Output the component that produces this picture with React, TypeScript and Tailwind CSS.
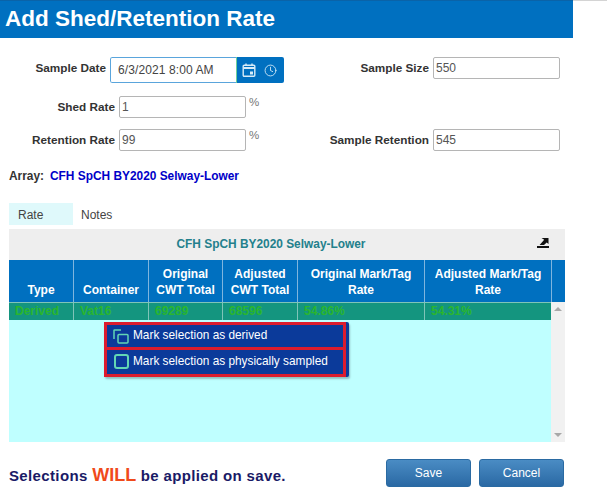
import { Clock } from "lucide-react";

function Field({ label, value, labelW, pct }: { label: string; value: string; labelW: string; pct?: boolean }) {
  return (
    <div className="flex items-start">
      <span className={`${labelW} text-right text-[11.75px] font-bold text-[#333] pt-[2px] pr-[4px] whitespace-nowrap`}>{label}</span>
      <div className="w-[127px] h-[22px] border border-[#b5b5b5] rounded-[2px] bg-white text-[12px] text-[#555] pl-[2px] leading-[20px]">{value}</div>
      {pct && <span className="ml-[3px] text-[11.5px] text-[#777] leading-[13px]">%</span>}
    </div>
  );
}

function HeadCell({ w, children }: { w: string; children: React.ReactNode }) {
  return (
    <div className={`${w} border-r border-[#7fb5de] flex items-end justify-center text-center pb-[4px] leading-[15.5px]`}>
      <span>{children}</span>
    </div>
  );
}

function RowCell({ w, children, last }: { w: string; children: React.ReactNode; last?: boolean }) {
  return (
    <div className={`${w} ${last ? "" : "border-r border-[#7fc4b8]"} pl-[6px] leading-[17px]`}>{children}</div>
  );
}

function DerivedIcon() {
  return (
    <svg width="16" height="15" viewBox="0 0 16 15" fill="none" stroke="#62d6b4" strokeWidth="1.5">
      <path d="M1 10V1.5a.5.5 0 0 1 .5-.5H8" />
      <rect x="5" y="5.5" width="10" height="8.5" rx="1" />
    </svg>
  );
}

function CalendarIcon() {
  return (
    <svg width="14" height="14" viewBox="0 0 14 14" fill="none" stroke="#d8ecf8" strokeWidth="1.4">
      <rect x="1.2" y="2.2" width="11.6" height="11" rx="1" />
      <path d="M1.2 5h11.6" strokeWidth="1.8" />
      <path d="M4 0.5v2.5M10 0.5v2.5" />
      <rect x="8" y="8.5" width="3" height="3" fill="#d8ecf8" stroke="none" />
    </svg>
  );
}

function ExportIcon() {
  return (
    <svg width="12" height="10" viewBox="0 0 12 10" fill="#111111">
      <rect x="0" y="8" width="12" height="2" />
      <path d="M4.5 0H11.5V6L9.7 4.4 7 7H2.6L7.2 1.8z" />
    </svg>
  );
}

export default function App() {
  return (
    <div className="w-[607px] h-[496px] bg-white overflow-hidden font-['Liberation_Sans',Arial,sans-serif] relative">
      <div className="flex h-[38px]">
        <div className="w-[573px] h-[38px] bg-[#0070c0] text-white text-[22.5px] font-bold pl-[5px] leading-[35px] border-t border-[#0a63a8]">
          Add Shed/Retention Rate
        </div>
        <div className="flex-1 h-px bg-[#d4d4d4]" />
      </div>

      <div className="mt-[19px] grid grid-cols-[320px_1fr]">
        <div className="flex items-start">
          <span className="w-[110px] text-right pr-[4px] pt-[2px] text-[11.75px] font-bold text-[#333] whitespace-nowrap">Sample Date</span>
          <div className="flex h-[26px] w-[174px] rounded-[2px] overflow-hidden">
            <div className="w-[126px] border border-[#5aa5dc] border-r-0 rounded-l-[2px] text-[12px] text-[#444] font-medium pl-[7px] leading-[25px] tracking-[0.1px]">6/3/2021 8:00 AM</div>
            <div className="w-px bg-[#6fd09a]" />
            <div className="flex-1 bg-[#0070c0] flex items-center gap-[8px] pl-[5px] text-[#d8ecf8]">
              <CalendarIcon />
              <Clock size={13} strokeWidth={1.6} />
            </div>
          </div>
        </div>
        <div className="flex justify-end pr-[47px]">
          <Field label="Sample Size" value="550" labelW="w-[100px]" />
        </div>
      </div>

      <div className="mt-[13px]">
        <Field label="Shed Rate" value="1" labelW="w-[119px]" pct />
      </div>

      <div className="mt-[11px] grid grid-cols-[320px_1fr]">
        <Field label="Retention Rate" value="99" labelW="w-[119px]" pct />
        <div className="flex justify-end pr-[47px]">
          <Field label="Sample Retention" value="545" labelW="w-[112px]" />
        </div>
      </div>

      <div className="mt-[18px] pl-[9px] flex text-[11.9px] font-bold leading-[14px]">
        <span className="text-[#333] w-[41px]">Array:</span>
        <span className="text-[#0000c8]">CFH SpCH BY2020 Selway-Lower</span>
      </div>

      <div className="mt-[20px] ml-[9px] flex text-[12px] text-[#444] h-[22px] leading-[24px]">
        <span className="w-[64px] bg-[#dff9fb] pl-[9px]">Rate</span>
        <span className="pl-[8px]">Notes</span>
      </div>

      <div className="mt-[4px] ml-[9px] w-[556px] h-[213px] flex flex-col bg-[#eeeeee]">
        <div className="h-[31px] flex items-center relative text-[11.9px] font-bold text-[#23808c] justify-center pr-[32px] shrink-0">
          CFH SpCH BY2020 Selway-Lower
          <span className="absolute left-[528px] top-[9px]"><ExportIcon /></span>
        </div>
        <div className="h-[42px] flex bg-[#0070c0] text-white text-[12px] font-bold shrink-0">
          <HeadCell w="w-[65px]">Type</HeadCell>
          <HeadCell w="w-[75px]">Container</HeadCell>
          <HeadCell w="w-[74px]">Original<br />CWT Total</HeadCell>
          <HeadCell w="w-[75px]">Adjusted<br />CWT Total</HeadCell>
          <HeadCell w="w-[127px]">Original Mark/Tag<br />Rate</HeadCell>
          <HeadCell w="w-[127px]">Adjusted Mark/Tag<br />Rate</HeadCell>
          <div className="flex-1" />
        </div>
        <div className="flex-1 flex min-h-0">
          <div className="w-[542px] bg-[#bfffff] flex flex-col">
            <div className="h-[18px] flex bg-[#14957f] text-[12px] font-bold text-[#2ab52e] border-t border-[#7fc4b8]">
              <RowCell w="w-[65px]">Derived</RowCell>
              <RowCell w="w-[75px]">Vat16</RowCell>
              <RowCell w="w-[74px]">69289</RowCell>
              <RowCell w="w-[75px]">68596</RowCell>
              <RowCell w="w-[127px]">54.86%</RowCell>
              <RowCell w="w-[126px]" last>54.31%</RowCell>
            </div>
          </div>
          <div className="flex-1 bg-[#f1f1f1] flex flex-col items-center justify-between py-[5px]">
            <span className="w-0 h-0 border-x-[4px] border-x-transparent border-b-[4px] border-b-[#a8a8a8]" />
            <span className="w-0 h-0 border-x-[4px] border-x-transparent border-t-[4px] border-t-[#a8a8a8]" />
          </div>
        </div>
      </div>

      <div className="absolute left-[104px] top-[322px] w-[245px] h-[55px] bg-[#0b3a9a] rounded-[2px] shadow-[1px_2px_2px_rgba(0,0,0,0.25)] text-[11.85px] text-white flex flex-col">
        <div className="w-[242px] h-[28px] border-[3px] border-[#dc1c2e] flex items-center gap-[4px] pl-[6px] leading-none">
          <DerivedIcon />
          <span>Mark selection as derived</span>
        </div>
        <div className="w-[242px] h-[27px] border-[3px] border-t-0 border-[#dc1c2e] flex items-center gap-[4px] pl-[7px] pb-[1px] leading-none">
          <span className="w-[15px] h-[15px] border-2 border-[#62d6b4] rounded-[3px]" />
          <span>Mark selection as physically sampled</span>
        </div>
      </div>

      <div className="mt-[17px] pl-[9px] pr-[43px] flex items-start justify-between">
        <div className="text-[15px] font-bold text-[#1a1a66] mt-[4px] tracking-[0.36px] leading-[24px]">
          Selections <span className="text-[18px] text-[#f04a1a] font-bold tracking-normal">WILL</span> be applied on save.
        </div>
        <div className="flex gap-[8px]">
          <button className="w-[85px] h-[28px] rounded-[3px] bg-gradient-to-b from-[#4a8cc4] to-[#2a69a4] border border-[#2a6aa2] text-white text-[12px]">Save</button>
          <button className="w-[85px] h-[28px] rounded-[3px] bg-gradient-to-b from-[#4a8cc4] to-[#2a69a4] border border-[#2a6aa2] text-white text-[12px]">Cancel</button>
        </div>
      </div>
    </div>
  );
}
